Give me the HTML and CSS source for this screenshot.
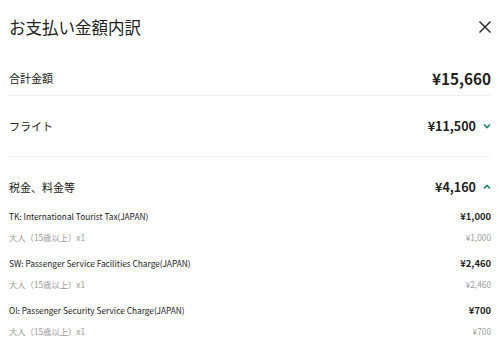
FILE: index.html
```html
<!DOCTYPE html>
<html lang="ja">
    <head>
        <meta charset="utf-8">
        <title>お支払い金額内訳</title>
        <link rel="stylesheet" href="styles.css">
    </head>
    <body>
        <div class="panel">
            <div class="panel-head">
                <h1 class="panel-title">お支払い金額内訳</h1>
                <button class="btn-close" aria-label="閉じる">
                    <svg width="12" height="12" viewBox="0 0 12 12">
                        <path d="M0.5 0.5 L11.5 11.5 M11.5 0.5 L0.5 11.5" stroke="#222" stroke-width="1.4" fill="none"/>
                    </svg>
                </button>
            </div>

            <div class="row row-total">
                <span class="row-label">合計金額</span>
                <span class="price price-total">¥15,660</span>
            </div>

            <div class="row row-group">
                <span class="row-label">フライト</span>
                <span class="price price-group">¥11,500
                    <svg class="chevron" width="8" height="6" viewBox="0 0 8 6">
                        <path d="M1 1.5 L4 4.5 L7 1.5" stroke="#1d8563" stroke-width="1.6" fill="none"/>
                    </svg>
                </span>
            </div>

            <div class="group-open">
                <div class="row row-head">
                    <span class="row-label">税金、料金等</span>
                    <span class="price price-group">¥4,160
                        <svg class="chevron" width="8" height="6" viewBox="0 0 8 6">
                            <path d="M1 4.5 L4 1.5 L7 4.5" stroke="#1d8563" stroke-width="1.6" fill="none"/>
                        </svg>
                    </span>
                </div>
                <div class="fee">
                    <div class="fee-line">
                        <span>TK: International Tourist Tax(JAPAN)</span>
                        <span class="fee-price">¥1,000</span>
                    </div>
                    <div class="fee-line fee-sub">
                        <span>大人（15歳以上）x1</span>
                        <span>¥1,000</span>
                    </div>
                </div>
                <div class="fee">
                    <div class="fee-line">
                        <span>SW: Passenger Service Facilities Charge(JAPAN)</span>
                        <span class="fee-price">¥2,460</span>
                    </div>
                    <div class="fee-line fee-sub">
                        <span>大人（15歳以上）x1</span>
                        <span>¥2,460</span>
                    </div>
                </div>
                <div class="fee">
                    <div class="fee-line">
                        <span>OI: Passenger Security Service Charge(JAPAN)</span>
                        <span class="fee-price">¥700</span>
                    </div>
                    <div class="fee-line fee-sub">
                        <span>大人（15歳以上）x1</span>
                        <span>¥700</span>
                    </div>
                </div>
            </div>
        </div>
    </body>
</html>
```

FILE: styles.css
```css
body {
    margin: 0;
    background: #fff;
    color: #222;
    font-family: "Noto Sans CJK JP", "Noto Sans", sans-serif;
}
.panel {
    padding: 0 9px;
}
.panel-head {
    height: 54px;
    display: flex;
    align-items: center;
    justify-content: space-between;
}
.panel-title {
    margin: 0;
    font-size: 16.5px;
    font-weight: 400;
    line-height: 20px;
}
.btn-close {
    border: none;
    background: none;
    padding: 0;
    width: 12px;
    height: 12px;
    display: block;
}
.btn-close svg {
    display: block;
}
.row {
    display: flex;
    align-items: center;
    justify-content: space-between;
    line-height: 20px;
}
.row-label {
    font-size: 11px;
}
.row-total {
    padding: 14px 0 7px;
    border-bottom: 1px solid #edf1f1;
}
.row-group {
    padding: 20px 0;
    border-bottom: 1px solid #edf1f1;
}
.row-head {
    padding: 20px 0 0;
    margin-bottom: 9px;
}
.price {
    font-weight: 700;
}
.price-total {
    font-size: 15.3px;
}
.price-group {
    font-size: 12.5px;
    display: flex;
    align-items: center;
}
.chevron {
    margin-left: 7px;
    display: block;
}
.fee {
    margin-bottom: 6px;
}
.fee-line {
    display: flex;
    justify-content: space-between;
    align-items: center;
    font-size: 8.3px;
    line-height: 20px;
}
.fee-price {
    font-size: 9.4px;
    font-weight: 700;
}
.fee-sub {
    margin-top: 1px;
    color: #9a9a9a;
}
```
